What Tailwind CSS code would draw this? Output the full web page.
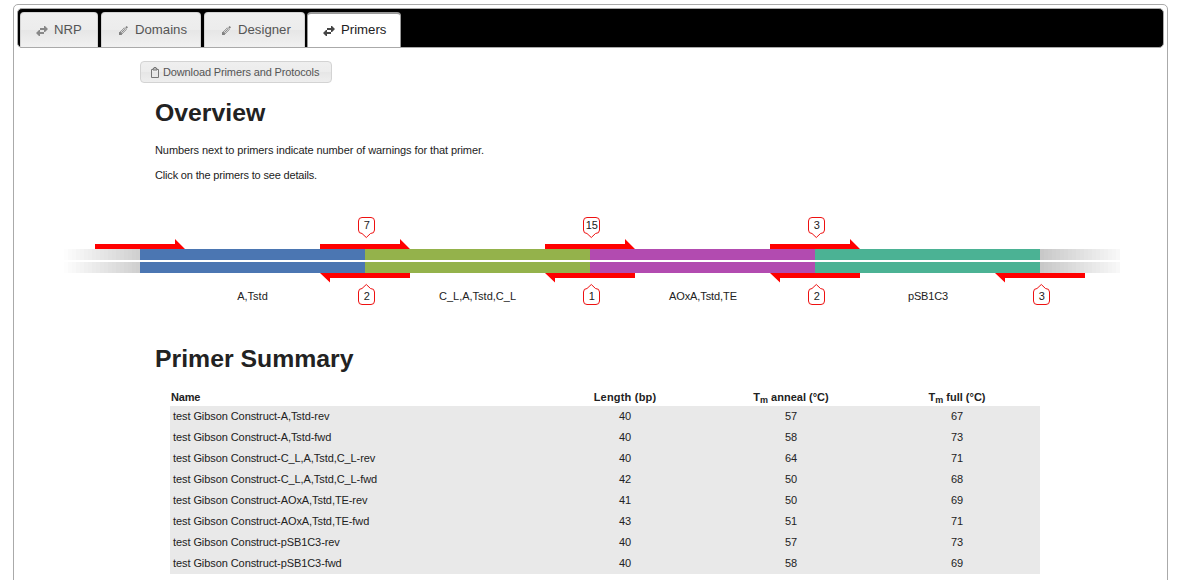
<!DOCTYPE html>
<html lang="en">
<head>
<meta charset="utf-8">
<title>Primers</title>
<script src="https://cdn.jsdelivr.net/npm/@tailwindcss/browser@4"></script>
</head>
<body class="h-[580px] overflow-hidden bg-white font-['Liberation_Sans',Arial,sans-serif] text-[11px] text-[#222222]">
<svg class="hidden">
  <symbol id="swap" viewBox="0 0 12 10"><path d="M4 2H8V0h1l3 3-3 3H8V4H4zM8 6H4V4H3L0 7l3 3H4V8H8z" fill="currentColor"/></symbol>
  <symbol id="pencil" viewBox="0 0 10 10"><path d="M1 7L6 2M3 9L8 4M6 2l2 2M2.500 7.500L6.500 3.500" fill="none" stroke="currentColor" stroke-width="1"/><path d="M7 1.500L8.500 0 10 1.500 8.500 3zM0 10V7l1.500-.5 2 2L3 10z" fill="currentColor"/></symbol>
</svg>
<main class="mr-[23px] ml-[13px] mt-1 h-[600px] rounded-[5px] border border-[#aaaaaa] px-[3px] pt-[3px]">
  <nav class="flex h-10 items-end gap-[3px] rounded-[5px] border border-[#aaaaaa] bg-black pl-0.5 text-[13.2px] text-[#555555]">
    <a class="flex h-[35px] w-[78px] items-center rounded-t-[4px] border border-b-0 border-[#d3d3d3] bg-[linear-gradient(#efefef,#ececec_50%,#e6e6e6_50%,#f1f1f1)] pl-[15px]"><svg class="mt-px mr-[6px] h-[10px] w-[12px] text-[#888888]"><use href="#swap"/></svg>NRP</a>
    <a class="flex h-[35px] w-[100px] items-center rounded-t-[4px] border border-b-0 border-[#d3d3d3] bg-[linear-gradient(#efefef,#ececec_50%,#e6e6e6_50%,#f1f1f1)] pl-[17px]"><svg class="mt-px mr-[7px] h-[9px] w-[9px] text-[#808080]"><use href="#pencil"/></svg>Domains</a>
    <a class="flex h-[35px] w-[101px] items-center rounded-t-[4px] border border-b-0 border-[#d3d3d3] bg-[linear-gradient(#efefef,#ececec_50%,#e6e6e6_50%,#f1f1f1)] pl-[17px]"><svg class="mt-px mr-[7px] h-[9px] w-[9px] text-[#808080]"><use href="#pencil"/></svg>Designer</a>
    <a class="-ml-px flex h-[35px] w-[94px] items-center rounded-t-[4px] border-x-[1.5px] border-t-2 border-[#999999] bg-white pl-[15px] text-[#212121]"><svg class="mr-[6px] h-[10px] w-[12px] text-[#454545]"><use href="#swap"/></svg><span class="-mt-px">Primers</span></a>
  </nav>
  <section class="pt-[13px] pl-[123px]">
    <button class="flex h-[22px] w-[192px] items-center rounded-[4px] border border-[#d3d3d3] bg-[linear-gradient(#efefef,#ececec_50%,#e6e6e6_50%,#eeeeee)] pl-[10px] tracking-[-0.13px] whitespace-nowrap text-[#555555]">
      <svg class="mr-[4px] h-[11px] w-[8px]" viewBox="0 0 8 11" fill="none" stroke="#777"><path d="M.5 2.500h7v8h-7z"/><path d="M2 3V1.500h1V.5h2v1h1V3z" fill="#ccc"/></svg>Download Primers and Protocols</button>
    <div class="pl-[15px]">
      <h1 class="mt-[15px] text-[24.8px] leading-[30px] font-bold">Overview</h1>
      <p class="mt-[15px] leading-[15px] tracking-[-0.09px]">Numbers next to primers indicate number of warnings for that primer.</p>
      <p class="mt-[10px] leading-[15px] tracking-[-0.17px]">Click on the primers to see details.</p>
    </div>
  </section>
  <svg id="diagram" class="-ml-[17px] mt-[27px] block h-[100px] w-[1180px]" viewBox="0 210 1180 100" font-size="11" text-anchor="middle" fill="#222">
    <g id="fades"></g>
    <path fill="#4b76b2" d="M140 249h225v11h-225zM140 262h225v11h-225z"/>
    <path fill="#94b24b" d="M365 249h225v11h-225zM365 262h225v11h-225z"/>
    <path fill="#b24bb0" d="M590 249h225v11h-225zM590 262h225v11h-225z"/>
    <path fill="#4bb294" d="M815 249h225v11h-225zM815 262h225v11h-225z"/>
    <g id="primers" fill="red"></g>
    <text x="252.500" y="300">A,Tstd</text>
    <text x="477.500" y="300">C_L,A,Tstd,C_L</text>
    <text x="703" y="300" textLength="68">AOxA,Tstd,TE</text>
    <text x="928" y="300" textLength="40">pSB1C3</text>
    <g id="warnings"></g>
  </svg>
  <section class="pl-[138px]">
    <h1 class="mt-[34px] text-[24.8px] leading-[30px] font-bold">Primer Summary</h1>
    <table class="mt-[15px] ml-[15px] w-[870px] table-fixed border-collapse text-center">
      <colgroup><col class="w-[372px]"><col class="w-[166px]"><col class="w-[166px]"><col class="w-[166px]"></colgroup>
      <thead><tr class="h-[17px] leading-[17px]"><th class="p-0 pl-px text-left tracking-[-0.2px]">Name</th><th class="p-0 tracking-[0.2px]">Length (bp)</th><th class="p-0">T<sub class="text-[9px]">m</sub> anneal (°C)</th><th class="p-0">T<sub class="text-[9px]">m</sub> full (°C)</th></tr></thead>
      <tbody id="rows" class="bg-[#e9e9e9]"></tbody>
    </table>
  </section>
</main>
<script>
const data = [['A,Tstd-rev',40,57,67],['A,Tstd-fwd',40,58,73],['C_L,A,Tstd,C_L-rev',40,64,71],['C_L,A,Tstd,C_L-fwd',42,50,68],['AOxA,Tstd,TE-rev',41,50,69],['AOxA,Tstd,TE-fwd',43,51,71],['pSB1C3-rev',40,57,73],['pSB1C3-fwd',40,58,69]];
document.getElementById('rows').innerHTML = data.map(([n, ...v]) =>
  `<tr class="h-[21px]"><td class="p-0 pl-[3px] text-left tracking-[-0.08px]">test Gibson Construct-${n}</td>${v.map(x => `<td class="p-0">${x}</td>`).join('')}</tr>`).join('');
let fades = '';
for (let i = 0; i < 20; i++) {
  const l = Math.round(255 - i * 2.5), r = Math.round(200 + i * 2.5);
  for (const y of [249, 262]) fades += `<rect x="${60 + i * 4}" y="${y}" width="4" height="11" fill="rgb(${l},${l},${l})"/><rect x="${1040 + i * 4}" y="${y}" width="4" height="11" fill="rgb(${r},${r},${r})"/>`;
}
document.getElementById('fades').innerHTML = fades;
document.getElementById('primers').innerHTML =
  [95, 320, 545, 770].map(x => `<path d="M${x} 244h80v-5l10 10h-90z"/>`).join('') +
  [320, 545, 770, 995].map(x => `<path d="M${x} 273h90v5h-80v4.500z"/>`).join('');
document.getElementById('warnings').innerHTML =
  [[366, 7], [591, 15], [816, 3]].map(([x, n]) => `<path transform="translate(${x} 0)" d="M-4 233.500L.3 237.500 4.500 233.500Q8.500 233.500 8.500 230V221Q8.500 217.500 5 217.500H-4Q-7.500 217.500-7.500 221V230Q-7.500 233.500-4 233.500z" fill="#fff" stroke="#e11"/><text x="${x + .8}" y="229">${n}</text>`).join('') +
  [[366, 2], [591, 1], [816, 2], [1041, 3]].map(([x, n]) => `<path transform="translate(${x} 0)" d="M-4 288.500L.3 284.500 4.500 288.500Q8.500 288.500 8.500 292V301Q8.500 304.500 5 304.500H-4Q-7.500 304.500-7.500 301V292Q-7.500 288.500-4 288.500z" fill="#fff" stroke="#e11"/><text x="${x + .8}" y="300">${n}</text>`).join('');
</script>
</body>
</html>
